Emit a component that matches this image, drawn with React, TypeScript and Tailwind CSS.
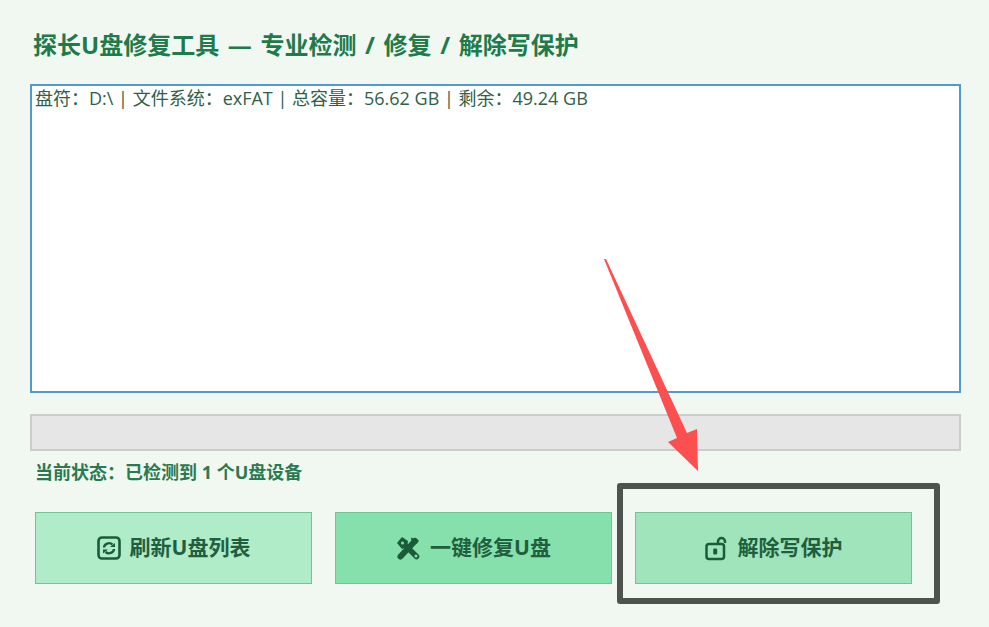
import { ReactNode } from 'react';

const FONT = "font-['Open_Sans','Noto_Sans_CJK_SC',sans-serif]";

function RefreshIcon() {
  return (
    <svg width="24" height="24" viewBox="0 0 24 24" fill="none">
      <rect x="1.5" y="1.5" width="21" height="21" rx="3.5" stroke="#1a5c3a" strokeWidth="2.6" />
      <path d="M7 11.5a5 4.5 0 0 1 8.5-3" stroke="#1a5c3a" strokeWidth="2.4" />
      <path d="M13 11h5V7z" fill="#1a5c3a" />
      <path d="M17 13a5 4.5 0 0 1-8.5 3" stroke="#1a5c3a" strokeWidth="2.4" />
      <path d="M11 13.5H6v4z" fill="#1a5c3a" />
    </svg>
  );
}

function ToolsIcon() {
  return (
    <svg width="25" height="25" viewBox="0 0 25 25" fill="none">
      <path d="M4.5 20.5L19 5" stroke="#1a5c3a" strokeWidth="6" strokeLinecap="round" />
      <path d="M6 6l14.5 14.5" stroke="#1a5c3a" strokeWidth="5.5" strokeLinecap="round" />
      <path d="M1 7l5-6 6 4-1 6-5 2z" fill="#1a5c3a" />
      <path d="M15 1.5l8 3-2 3-5 1z" fill="#1a5c3a" />
      <circle cx="6.5" cy="7" r="1.5" fill="#86e0ab" />
      <circle cx="20" cy="20" r="1.5" fill="#86e0ab" />
    </svg>
  );
}

function UnlockIcon() {
  return (
    <svg width="24" height="25" viewBox="0 0 24 25" fill="none">
      <rect x="1.5" y="8" width="17.5" height="15" rx="2.5" stroke="#1a5c3a" strokeWidth="2.5" />
      <path d="M13 8V5.5a3.5 3.5 0 0 1 7 0V7" stroke="#1a5c3a" strokeWidth="2.5" />
      <rect x="8.2" y="12.5" width="4" height="6" rx="1.2" fill="#1a5c3a" />
    </svg>
  );
}

function ActionButton({ icon, label, className }: { icon: ReactNode; label: string; className: string }) {
  return (
    <button
      type="button"
      className={`flex h-[72px] w-[277px] items-center justify-center gap-[9px] border border-[#6fc596] text-[21px] font-bold text-[#1f5f3f] ${className}`}
    >
      {icon}
      {label}
    </button>
  );
}

export default function App() {
  return (
    <div className={`${FONT} relative h-[627px] w-[989px] overflow-hidden bg-[#f0f8f1]`}>
      <div className="flex h-full flex-col pl-[30px] pr-[28px] pt-[27px]">
        <h1 className="pl-[3px] text-[24px] font-bold leading-[36px] text-[#217a4a] [word-spacing:2.4px]">
          探长U盘修复工具 — 专业检测 / 修复 / 解除写保护
        </h1>

        {/* Disk list */}
        <div className="mt-[21px] h-[309px] border-2 border-[#4f9bd1] bg-white px-[3px] text-[18px] leading-[24px] text-[#2f5f48]">
          盘符：D:\ | 文件系统：exFAT | 总容量：56.62 GB | 剩余：49.24 GB
        </div>

        {/* Progress */}
        <div className="mt-[21px] h-[37px] border-2 border-[#cccccc] bg-[#e6e6e6]" />

        <p className="mt-[9px] pl-[5px] text-[18px] font-bold leading-[24px] text-[#2a7a50]">
          当前状态：已检测到 1 个U盘设备
        </p>

        <div className="mt-[28px] flex gap-[23px] pl-[5px]">
          <ActionButton icon={<RefreshIcon />} label="刷新U盘列表" className="bg-[#b0ecc8]" />
          <ActionButton icon={<ToolsIcon />} label="一键修复U盘" className="bg-[#86e0ab]" />
          <ActionButton icon={<UnlockIcon />} label="解除写保护" className="bg-[#a0e4bb]" />
        </div>
      </div>

      {/* Annotation: highlight box and arrow */}
      <div className="absolute left-[617px] top-[483px] h-[121px] w-[323px] rounded-[3px] border-[6px] border-[#4f534f]" />
      <svg className="absolute left-0 top-0" width="989" height="627" viewBox="0 0 989 627">
        <path d="M604 259L606 259L687 433L697 429L698 471L668 442L677 438Z" fill="#fb4f50" />
      </svg>
    </div>
  );
}
